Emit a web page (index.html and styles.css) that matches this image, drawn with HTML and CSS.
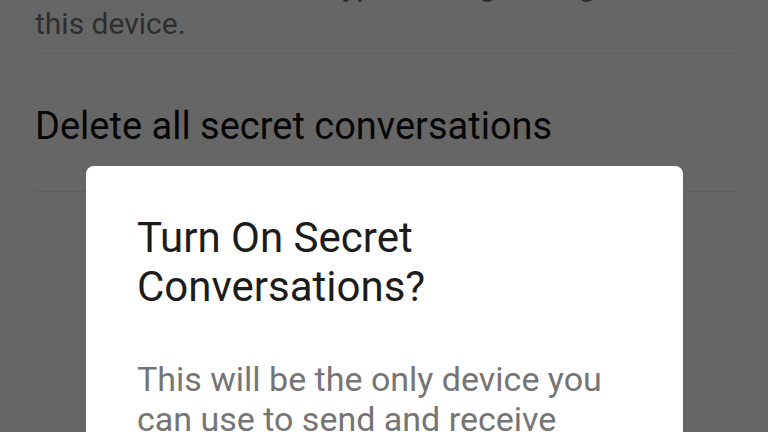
FILE: index.html
```html
<!DOCTYPE html>
<html lang="en">
<head>
  <meta charset="UTF-8" />
  <meta name="viewport" content="width=device-width, initial-scale=1.0"/>
  <title>Secret Conversations</title>
  <link rel="stylesheet" href="styles.css">
</head>
<body>
  <div class="settings">
    <div class="item item-info">
      <p class="desc">Conversations are encrypted using the Signal Protocol on<br>this device.</p>
    </div>
    <div class="item item-action">
      <span class="action">Delete all secret conversations</span>
    </div>
  </div>

  <div class="overlay">
    <div class="dialog">
      <h2 class="dialog-title">Turn On Secret Conversations?</h2>
      <p class="dialog-body">This will be the only device you can use to send and receive secret messages.</p>
    </div>
  </div>
</body>
</html>
```

FILE: styles.css
```css
* { box-sizing: border-box; }

html, body {
  margin: 0;
  height: 100%;
  overflow: hidden;
}

body {
  font-family: Roboto, "Noto Sans", sans-serif;
  background: #ffffff;
  position: relative;
}

.settings {
  margin-top: -33px;
  padding: 0 33px 0 35px;
}

.item {
  border-bottom: 1px solid #ececec;
}

.desc {
  margin: 0;
  font-size: 30px;
  line-height: 38px;
  color: #757575;
  padding-bottom: 10px;
  white-space: nowrap;
}

.item-action {
  padding: 49px 0 42px;
}

.action {
  display: block;
  font-size: 38px;
  line-height: 46px;
  color: #111111;
}

.overlay {
  position: absolute;
  inset: 0;
  background: rgba(0, 0, 0, 0.6);
}

.dialog {
  position: absolute;
  left: 86px;
  top: 166px;
  width: 597px;
  height: 400px;
  background: #ffffff;
  border-radius: 8px;
  padding: 47px 51px 0;
}

.dialog-title {
  margin: 0;
  font-size: 42px;
  font-weight: 400;
  line-height: 49px;
  color: #1c1c1c;
}

.dialog-body {
  margin: 48px 0 0;
  font-size: 34px;
  line-height: 40px;
  color: #757575;
}
```
